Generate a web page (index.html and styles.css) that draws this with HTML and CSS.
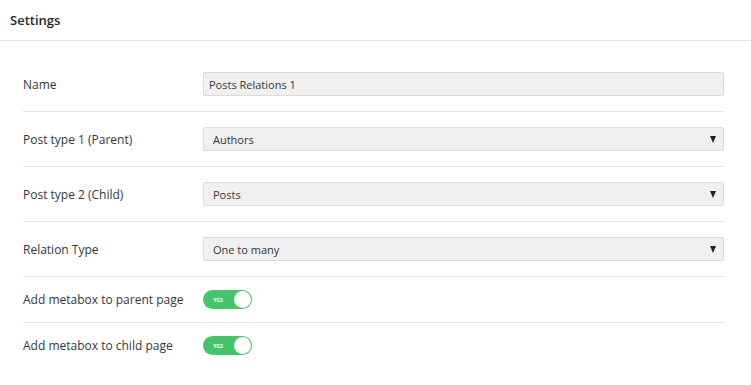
FILE: index.html
```html
<!DOCTYPE html>
<html>
<head>
<meta charset="utf-8">
<link rel="stylesheet" href="styles.css">
</head>
<body>
<div class="panel">
  <div class="panel-header">Settings</div>
  <div class="panel-body">
    <div class="row">
      <div class="label">Name</div>
      <div class="field"><div class="input">Posts Relations 1</div></div>
    </div>
    <div class="row">
      <div class="label">Post type 1 (Parent)</div>
      <div class="field"><div class="select"><span>Authors</span><span class="arrow"></span></div></div>
    </div>
    <div class="row">
      <div class="label">Post type 2 (Child)</div>
      <div class="field"><div class="select"><span>Posts</span><span class="arrow"></span></div></div>
    </div>
    <div class="row">
      <div class="label">Relation Type</div>
      <div class="field"><div class="select"><span>One to many</span><span class="arrow"></span></div></div>
    </div>
    <div class="row row-toggle">
      <div class="label">Add metabox to parent page</div>
      <div class="field"><div class="toggle"><span class="yes">YES</span><span class="knob"></span></div></div>
    </div>
    <div class="row row-toggle last">
      <div class="label">Add metabox to child page</div>
      <div class="field"><div class="toggle"><span class="yes">YES</span><span class="knob"></span></div></div>
    </div>
  </div>
</div>
</body>
</html>
```

FILE: styles.css
```css
* { box-sizing: border-box; }
html, body { margin: 0; padding: 0; background: #fff; }
body {
  font-family: "Open Sans", "Noto Sans", sans-serif;
  color: #32373c;
}
.panel-header {
  height: 41px;
  padding: 0 10px;
  display: flex;
  align-items: center;
  font-size: 13px;
  font-weight: 600;
  color: #23282d;
  border-bottom: 1px solid #e5e5e5;
}
.panel-body {
  padding: 16px 27px 0 23px;
}
.row {
  display: flex;
  align-items: center;
  padding: 15px 0;
  border-bottom: 1px solid #e5e5e5;
}
.row.row-toggle { padding: 13px 0; }
.row.last { border-bottom: none; }
.label {
  width: 180px;
  flex: none;
  font-size: 12px;
  color: #32373c;
}
.field { flex: 1; }
.input, .select {
  height: 24px;
  background: #f0f0f0;
  border: 1px solid #dcdcdc;
  border-radius: 2px;
  font-size: 11px;
  color: #32373c;
  display: flex;
  align-items: center;
}
.input { padding: 0 5px; }
.select { padding: 0 7px 0 9px; justify-content: space-between; }
.arrow {
  width: 0; height: 0;
  border-left: 3.5px solid transparent;
  border-right: 3.5px solid transparent;
  border-top: 7px solid #222;
}
.toggle {
  width: 49px;
  height: 19px;
  border-radius: 10px;
  background: #46c46b;
  display: flex;
  align-items: center;
  justify-content: space-between;
  padding: 0 1px 0 10px;
}
.yes {
  font-size: 6px;
  font-weight: 700;
  color: #e6f7ea;
  letter-spacing: -0.2px;
}
.knob {
  width: 17px;
  height: 17px;
  border-radius: 50%;
  background: #fff;
}
```
